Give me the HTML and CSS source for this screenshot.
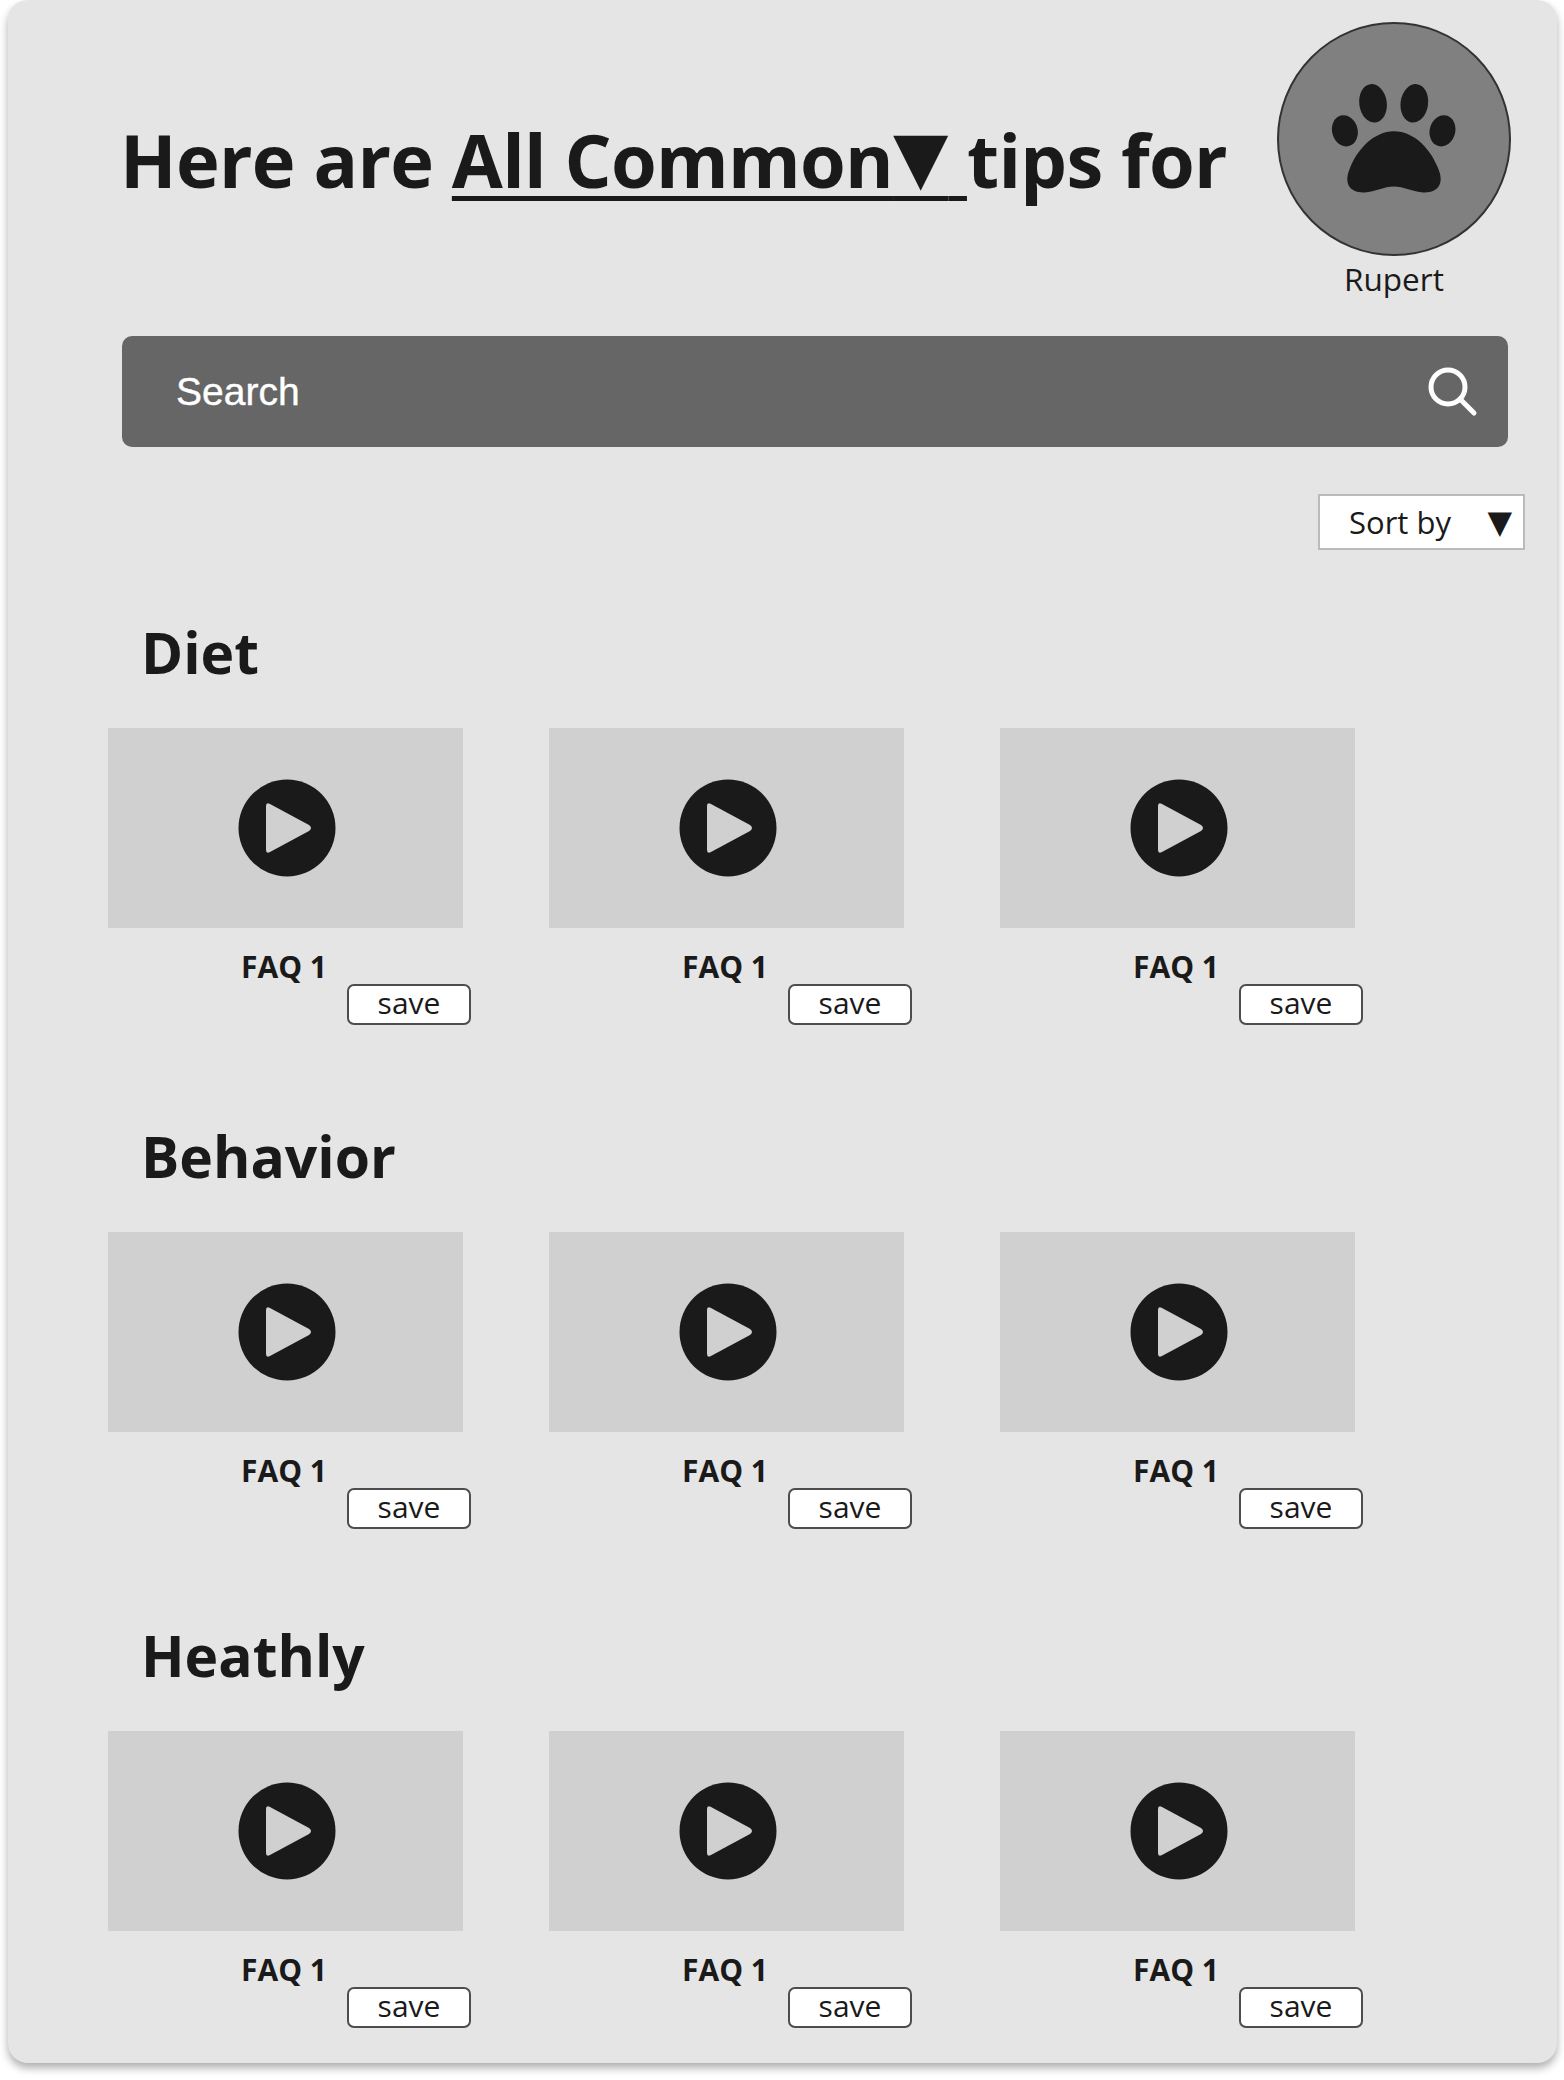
FILE: index.html
```html
<!DOCTYPE html>
<html lang="en">
<head>
<meta charset="utf-8">
<title>Tips for Rupert</title>
<link rel="stylesheet" href="styles.css">
</head>
<body>
<main class="card">
  <header class="header">
    <h1 class="title">Here are <span class="choice">All Common<span class="caret">▼</span> </span>tips for</h1>
    <div class="pet">
      <div class="avatar">
        <svg class="paw" viewBox="232 66 700 702" aria-hidden="true">
          <ellipse cx="432" cy="392" rx="39" ry="48" transform="rotate(-15 432 392)"/>
          <ellipse cx="518" cy="308" rx="42" ry="59" transform="rotate(-8 518 308)"/>
          <ellipse cx="644" cy="308" rx="42" ry="59" transform="rotate(8 644 308)"/>
          <ellipse cx="730" cy="392" rx="39" ry="48" transform="rotate(15 730 392)"/>
          <path d="M582 393C645 393 695 450 716 505C738 555 715 582 672 580C640 578 610 562 582 562C552 562 525 578 492 580C449 582 426 555 448 505C469 450 520 393 582 393Z"/>
        </svg>
      </div>
      <div class="pet-name">Rupert</div>
    </div>
  </header>

  <div class="search">
    <span class="search-label">Search</span>
    <svg class="search-icon" viewBox="0 0 50 50" aria-hidden="true">
      <circle cx="20" cy="20" r="17"/>
      <path d="M32 32L46 46"/>
    </svg>
  </div>

  <div class="sort-row">
    <div class="sort"><span>Sort by</span><span class="sort-caret">▼</span></div>
  </div>

  <section class="topic topic-diet">
    <h2 class="topic-title">Diet</h2>
    <div class="faqs">
      <article class="faq"><div class="thumb"><svg class="play" viewBox="0 0 98 98" aria-hidden="true"><circle class="play-disc" cx="49" cy="49" r="48.5"/><path class="play-arrow" d="M28 27Q28 23 32 25L71 46Q75 49 71 52L32 73Q28 75 28 71Z"/></svg></div><div class="faq-label">FAQ 1</div><button class="save">save</button></article>
      <article class="faq"><div class="thumb"><svg class="play" viewBox="0 0 98 98" aria-hidden="true"><circle class="play-disc" cx="49" cy="49" r="48.5"/><path class="play-arrow" d="M28 27Q28 23 32 25L71 46Q75 49 71 52L32 73Q28 75 28 71Z"/></svg></div><div class="faq-label">FAQ 1</div><button class="save">save</button></article>
      <article class="faq"><div class="thumb"><svg class="play" viewBox="0 0 98 98" aria-hidden="true"><circle class="play-disc" cx="49" cy="49" r="48.5"/><path class="play-arrow" d="M28 27Q28 23 32 25L71 46Q75 49 71 52L32 73Q28 75 28 71Z"/></svg></div><div class="faq-label">FAQ 1</div><button class="save">save</button></article>
    </div>
  </section>

  <section class="topic topic-behavior">
    <h2 class="topic-title">Behavior</h2>
    <div class="faqs">
      <article class="faq"><div class="thumb"><svg class="play" viewBox="0 0 98 98" aria-hidden="true"><circle class="play-disc" cx="49" cy="49" r="48.5"/><path class="play-arrow" d="M28 27Q28 23 32 25L71 46Q75 49 71 52L32 73Q28 75 28 71Z"/></svg></div><div class="faq-label">FAQ 1</div><button class="save">save</button></article>
      <article class="faq"><div class="thumb"><svg class="play" viewBox="0 0 98 98" aria-hidden="true"><circle class="play-disc" cx="49" cy="49" r="48.5"/><path class="play-arrow" d="M28 27Q28 23 32 25L71 46Q75 49 71 52L32 73Q28 75 28 71Z"/></svg></div><div class="faq-label">FAQ 1</div><button class="save">save</button></article>
      <article class="faq"><div class="thumb"><svg class="play" viewBox="0 0 98 98" aria-hidden="true"><circle class="play-disc" cx="49" cy="49" r="48.5"/><path class="play-arrow" d="M28 27Q28 23 32 25L71 46Q75 49 71 52L32 73Q28 75 28 71Z"/></svg></div><div class="faq-label">FAQ 1</div><button class="save">save</button></article>
    </div>
  </section>

  <section class="topic topic-health">
    <h2 class="topic-title">Heathly</h2>
    <div class="faqs">
      <article class="faq"><div class="thumb"><svg class="play" viewBox="0 0 98 98" aria-hidden="true"><circle class="play-disc" cx="49" cy="49" r="48.5"/><path class="play-arrow" d="M28 27Q28 23 32 25L71 46Q75 49 71 52L32 73Q28 75 28 71Z"/></svg></div><div class="faq-label">FAQ 1</div><button class="save">save</button></article>
      <article class="faq"><div class="thumb"><svg class="play" viewBox="0 0 98 98" aria-hidden="true"><circle class="play-disc" cx="49" cy="49" r="48.5"/><path class="play-arrow" d="M28 27Q28 23 32 25L71 46Q75 49 71 52L32 73Q28 75 28 71Z"/></svg></div><div class="faq-label">FAQ 1</div><button class="save">save</button></article>
      <article class="faq"><div class="thumb"><svg class="play" viewBox="0 0 98 98" aria-hidden="true"><circle class="play-disc" cx="49" cy="49" r="48.5"/><path class="play-arrow" d="M28 27Q28 23 32 25L71 46Q75 49 71 52L32 73Q28 75 28 71Z"/></svg></div><div class="faq-label">FAQ 1</div><button class="save">save</button></article>
    </div>
  </section>
</main>
</body>
</html>
```

FILE: styles.css
```css
* { box-sizing: border-box; }
html, body { margin: 0; padding: 0; background: #fff; }
body {
  width: 1564px;
  height: 2080px;
  overflow: hidden;
  padding-left: 8px;
  font-family: "Open Sans", sans-serif;
  color: #1a1a1a;
}
.card {
  width: 1549px;
  height: 2063px;
  background: #e5e5e5;
  border-radius: 20px;
  box-shadow: 0 5px 8px rgba(0, 0, 0, .32);
  padding-top: 22px;
}
.header {
  display: flex;
  justify-content: space-between;
  padding-left: 112px;
  padding-right: 46px;
}
.title {
  margin: 90px 0 0;
  font-size: 74px;
  letter-spacing: -.7px;
  line-height: 96px;
  font-weight: 700;
  white-space: pre-wrap;
}
.choice { text-decoration: underline; text-decoration-thickness: 5px; text-underline-offset: 8px; }
.caret { font-family: "DejaVu Sans", sans-serif; font-size: 72px; letter-spacing: 0; line-height: 0; vertical-align: 6px; }
.pet { display: flex; flex-direction: column; align-items: center; width: 234px; }
.avatar {
  width: 234px;
  height: 234px;
  border-radius: 50%;
  background: #808080;
  border: 2px solid #333;
  overflow: hidden;
}
.paw { display: block; width: 230px; height: 230px; fill: #1a1a1a; }
.pet-name { font-size: 31.5px; line-height: 40px; margin-top: 3px; }
.search {
  display: flex;
  align-items: center;
  justify-content: space-between;
  width: 1386px;
  height: 111px;
  margin: 37px 0 0 114px;
  padding: 0 30px 0 54px;
  background: #666;
  border-radius: 10px;
  color: #fff;
}
.search-label { font-family: "Liberation Sans", sans-serif; font-size: 39px; -webkit-text-stroke: .4px #fff; }
.search-icon { width: 50px; height: 50px; fill: none; stroke: #fff; stroke-width: 5; stroke-linecap: round; }
.sort-row { display: flex; justify-content: flex-end; padding-right: 32px; margin-top: 47px; }
.sort {
  display: flex;
  align-items: center;
  justify-content: space-between;
  width: 207px;
  height: 56px;
  padding: 0 11px 0 29px;
  background: #fff;
  border: 2px solid #bbb;
  font-size: 31px;
}
.sort-caret { font-family: "DejaVu Sans", sans-serif; font-size: 32px; }
.topic { padding-left: 100px; }
.topic-title { margin: 0 0 0 33px; font-size: 57px; line-height: 76px; font-weight: 700; }
.topic-diet { margin-top: 64px; }
.topic-behavior { margin-top: 93px; }
.topic-health { margin-top: 88px; }
.faqs { display: grid; grid-template-columns: 441px 451px 355px; margin-top: 38px; }
.faq { display: flex; flex-direction: column; width: 355px; }
.thumb { display: flex; align-items: center; justify-content: center; height: 200px; background: #d0d0d0; }
.play { width: 98px; height: 98px; margin-left: 2px; }
.play-disc { fill: #1a1a1a; }
.play-arrow { fill: #d0d0d0; }
.faq-label { margin-top: 19px; text-align: center; font-size: 30px; line-height: 40px; font-weight: 700; margin-right: 3px; }
.save {
  align-self: flex-end;
  width: 124px;
  height: 41px;
  margin: -3px -8px 0 0;
  padding: 0 0 3px;
  background: #fff;
  border: 2px solid #4d4d4d;
  border-radius: 7px;
  font-family: "Open Sans", sans-serif;
  font-size: 30px;
  line-height: 1;
  color: #1a1a1a;
}
```
